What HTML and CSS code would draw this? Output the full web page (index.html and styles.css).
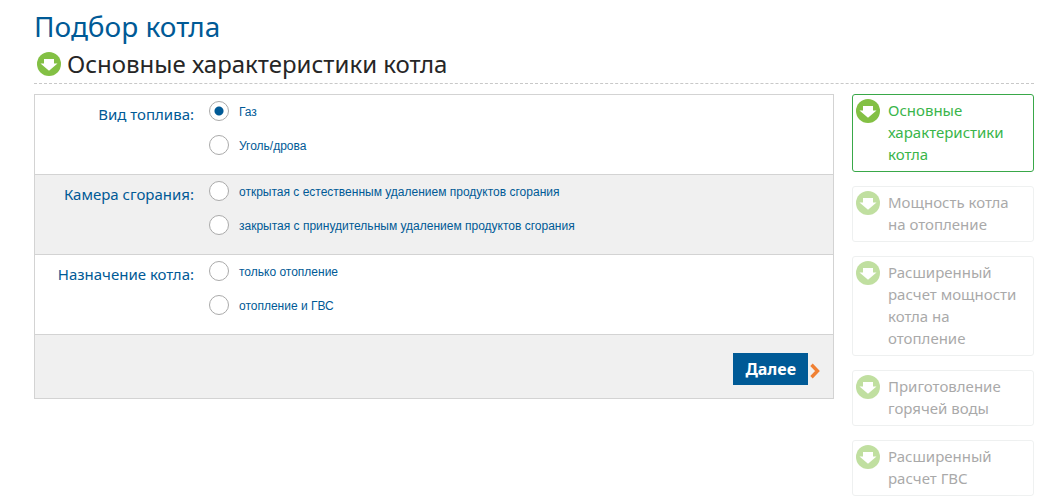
FILE: index.html
```html
<!DOCTYPE html>
<html lang="ru">
<head>
<meta charset="utf-8">
<title>Подбор котла</title>
<link rel="stylesheet" href="styles.css">
</head>
<body>
<svg class="defs" aria-hidden="true">
  <symbol id="step-arrow" viewBox="0 0 24 24">
    <circle cx="12" cy="12" r="12" fill="#83c044"/>
    <path d="M7 7H17V11.500H20.500L12 18.800L3.500 11.500H7Z" fill="#fff"/>
  </symbol>
</svg>
<main class="page">
  <h1 class="title">Подбор котла</h1>
  <h2 class="subtitle"><svg class="icon"><use href="#step-arrow"/></svg><span>Основные характеристики котла</span></h2>
  <div class="columns">
    <form class="form">
      <div class="row" role="radiogroup" aria-labelledby="fuel">
        <div class="name" id="fuel">Вид топлива:</div>
        <div class="options">
          <label class="option"><input class="radio" type="radio" name="fuel" checked><span class="text">Газ</span></label>
          <label class="option"><input class="radio" type="radio" name="fuel"><span class="text">Уголь/дрова</span></label>
        </div>
      </div>
      <div class="row shaded" role="radiogroup" aria-labelledby="chamber">
        <div class="name" id="chamber">Камера сгорания:</div>
        <div class="options">
          <label class="option"><input class="radio" type="radio" name="chamber"><span class="text">открытая с естественным удалением продуктов сгорания</span></label>
          <label class="option"><input class="radio" type="radio" name="chamber"><span class="text">закрытая с принудительным удалением продуктов сгорания</span></label>
        </div>
      </div>
      <div class="row" role="radiogroup" aria-labelledby="purpose">
        <div class="name" id="purpose">Назначение котла:</div>
        <div class="options">
          <label class="option"><input class="radio" type="radio" name="purpose"><span class="text">только отопление</span></label>
          <label class="option"><input class="radio" type="radio" name="purpose"><span class="text">отопление и ГВС</span></label>
        </div>
      </div>
      <div class="actions shaded">
        <button class="next" type="button">Далее</button>
        <svg class="chevron" viewBox="0 0 10 16" aria-hidden="true"><path d="M1.500 1.800L7.500 8L1.500 14.200" fill="none" stroke="#f08033" stroke-width="3.400"/></svg>
      </div>
    </form>
    <ol class="steps">
      <li class="step current"><svg class="icon"><use href="#step-arrow"/></svg><span>Основные характеристики котла</span></li>
      <li class="step"><svg class="icon"><use href="#step-arrow"/></svg><span>Мощность котла на отопление</span></li>
      <li class="step"><svg class="icon"><use href="#step-arrow"/></svg><span>Расширенный расчет мощности котла на отопление</span></li>
      <li class="step"><svg class="icon"><use href="#step-arrow"/></svg><span>Приготовление горячей воды</span></li>
      <li class="step"><svg class="icon"><use href="#step-arrow"/></svg><span>Расширенный расчет ГВС</span></li>
    </ol>
  </div>
</main>
</body>
</html>
```

FILE: styles.css
```css
* {
  box-sizing: border-box;
}

body {
  margin: 0;
  background: #fff;
  font-family: "Liberation Sans", Arial, sans-serif;
}

.defs {
  position: absolute;
  width: 0;
  height: 0;
}

.page {
  padding: 7px 25px 0 34px;
}

.title {
  margin: 0;
  color: #005a96;
  font: 400 28px/38px "Noto Sans", sans-serif;
}

.subtitle {
  display: flex;
  align-items: center;
  gap: 6px;
  margin: 0 0 10px;
  padding: 3px 3px 3px;
  border-bottom: 1px dashed #c8c8c8;
  color: #262626;
  font: 400 24px/32px "Noto Sans", sans-serif;
}

.icon {
  flex: none;
  width: 24px;
  height: 24px;
}

.columns {
  display: flex;
  align-items: flex-start;
  gap: 18px;
}

.form {
  flex: 1;
  border: 1px solid #d3d3d3;
}

.row {
  display: flex;
  gap: 15px;
  padding: 6px 10px 19px 0;
  border-bottom: 1px solid #d3d3d3;
}

.shaded {
  background: #f0f0f0;
}

.name {
  flex: none;
  width: 159px;
  padding-top: 1px;
  color: #005a96;
  text-align: right;
  font: 400 15px/24px "Noto Sans", sans-serif;
}

.options {
  display: flex;
  flex-direction: column;
  gap: 14px;
}

.option {
  display: flex;
  align-items: center;
  gap: 10px;
  color: #005a96;
  font-size: 12px;
  line-height: 18px;
}

.text {
  padding-top: 2px;
}

.radio {
  appearance: none;
  flex: none;
  width: 20px;
  height: 20px;
  margin: 0;
  border: 1px solid #aaa;
  border-radius: 50%;
  background: #fff;
}

.radio:checked {
  background: radial-gradient(circle, #005a96 4px, #fff 5px);
}

.actions {
  display: flex;
  justify-content: flex-end;
  align-items: center;
  gap: 2px;
  padding: 18px 13px 13px;
}

.next {
  padding: 0 12px;
  border: 0;
  background: #005a96;
  color: #fff;
  font: 700 16px/32px "Noto Sans", sans-serif;
}

.chevron {
  width: 10px;
  height: 16px;
  margin-top: 4px;
}

.steps {
  display: flex;
  flex: none;
  flex-direction: column;
  gap: 14px;
  width: 182px;
  margin: 0;
  padding: 0;
  list-style: none;
}

.step {
  display: flex;
  gap: 8px;
  padding: 4px 12px 6px 3px;
  border: 1px solid #dfe3e3;
  border-radius: 3px;
  color: #555;
  font: 400 15px/22px "Noto Sans", sans-serif;
  opacity: 0.5;
}

.current {
  border-color: #39a849;
  color: #39b54a;
  opacity: 1;
}
```
